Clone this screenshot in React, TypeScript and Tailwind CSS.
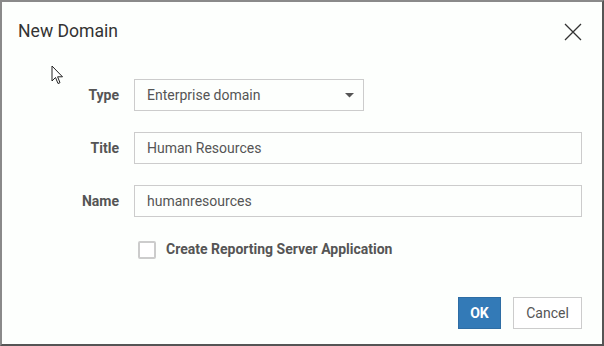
import React from "react";

export default function App() {
  return (
    <div
      className="relative w-[604px] h-[346px] bg-[#fdfffd] border-2 border-t-[#8a8a8a] border-l-[#8a8a8a] border-r-[#555] border-b-[#555] box-border overflow-hidden"
      style={{ fontFamily: "Roboto, 'Liberation Sans', sans-serif" }}
    >
      {/* Header */}
      <div className="flex items-center justify-between h-[58px] pl-[16px] pr-[20px] pt-[1px]">
        <div className="text-[17.6px] text-[#333] leading-none">New Domain</div>
        <svg width="18" height="18" viewBox="0 0 18 18" className="mt-[1px]">
          <path d="M1 1 L17 17 M17 1 L1 17" stroke="#333" strokeWidth="1.3" fill="none" />
        </svg>
      </div>

      {/* Body */}
      <div className="flex flex-col gap-[21px] pt-[19px] pr-[20px]">
        <div className="flex items-center">
          <div className="w-[117px] text-right text-[14px] font-bold text-[#555]">Type</div>
          <div className="ml-[15px] w-[230px] h-[32px] border border-[#ccc] flex items-center justify-between pl-[12px] pr-[9px]">
            <span className="text-[14px] text-[#555]">Enterprise domain</span>
            <svg width="9" height="5" viewBox="0 0 9 5">
              <path d="M0 0 L9 0 L4.5 4.5 Z" fill="#555" />
            </svg>
          </div>
        </div>
        <div className="flex items-center">
          <div className="w-[117px] text-right text-[14px] font-bold text-[#555]">Title</div>
          <div className="ml-[15px] flex-1 h-[32px] border border-[#ccc] flex items-center pl-[12px]">
            <span className="text-[14px] text-[#555]">Human Resources</span>
          </div>
        </div>
        <div className="flex items-center">
          <div className="w-[117px] text-right text-[14px] font-bold text-[#555]">Name</div>
          <div className="ml-[15px] flex-1 h-[32px] border border-[#ccc] flex items-center pl-[12px]">
            <span className="text-[14px] text-[#555]">humanresources</span>
          </div>
        </div>
        <div className="flex items-center pl-[136px] mt-[1px]">
          <div className="w-[18px] h-[18px] border-2 border-[#ccc] rounded-[2px] bg-white" />
          <span className="ml-[10px] text-[14px] font-bold text-[#555]">Create Reporting Server Application</span>
        </div>
      </div>

      {/* Footer */}
      <div className="absolute right-[20px] bottom-[15px] flex gap-[12px]">
        <button className="w-[43px] h-[32px] bg-[#337ab7] text-white text-[14px] font-bold border border-[#2e6da4]">OK</button>
        <button className="w-[69px] h-[32px] bg-white text-[#555] text-[14px] border border-[#ccc]">Cancel</button>
      </div>

      {/* Mouse cursor overlay */}
      <svg width="14" height="22" viewBox="0 0 14 22" className="absolute left-[49px] top-[63px]">
        <path d="M1 1 L1 16 L4.5 12.5 L7 18.5 L9 17.7 L6.6 11.8 L11.5 11.8 Z" fill="#fff" stroke="#222" strokeWidth="1" strokeLinejoin="miter" />
      </svg>
    </div>
  );
}
